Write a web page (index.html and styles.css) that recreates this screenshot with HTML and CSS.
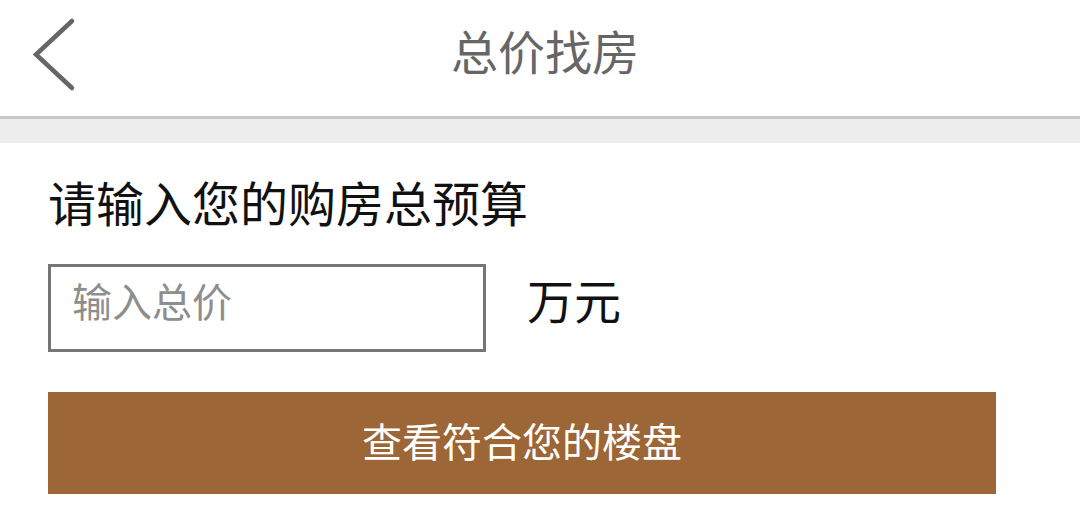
FILE: index.html
```html
<!DOCTYPE html>
<html lang="zh-CN">
<head>
<meta charset="utf-8">
<title>总价找房</title>
<link rel="stylesheet" href="styles.css">
</head>
<body>
<header class="topbar">
  <a class="back" href="#" aria-label="返回">
    <svg width="110" height="116" viewBox="0 0 110 116">
      <polyline points="72,21 36,54.5 72,88" fill="none" stroke="#666" stroke-width="4.5" stroke-linecap="round" stroke-linejoin="miter"/>
    </svg>
  </a>
  <h1 class="title">总价找房</h1>
  <div class="spacer"></div>
</header>
<div class="band"></div>
<main class="content">
  <p class="label">请输入您的购房总预算</p>
  <div class="row">
    <input class="price" type="text" placeholder="输入总价">
    <span class="unit">万元</span>
  </div>
  <button class="submit" type="button">查看符合您的楼盘</button>
</main>
</body>
</html>
```

FILE: styles.css
```css
* { box-sizing: border-box; }
html, body {
  margin: 0;
  padding: 0;
  background: #fff;
  font-family: "Noto Sans CJK SC", "Noto Sans", sans-serif;
}
.topbar {
  display: flex;
  align-items: center;
  height: 119px;
  border-bottom: 3px solid #c9c9c9;
  background: #fff;
}
.back {
  display: block;
  width: 110px;
  height: 116px;
  flex: none;
}
.back svg { display: block; }
.title {
  flex: 1;
  margin: 0 0 16px;
  text-align: center;
  font-size: 47px;
  font-weight: 400;
  line-height: 48px;
  color: #666;
}
.spacer {
  width: 100px;
  flex: none;
}
.band {
  height: 24px;
  background: #ededed;
}
.content {
  padding: 34px 84px 0 48px;
}
.label {
  margin: 0;
  font-size: 48px;
  line-height: 48px;
  color: #111;
}
.row {
  display: flex;
  align-items: center;
  margin-top: 39px;
}
.price {
  width: 438px;
  height: 88px;
  border: 3px solid #757575;
  padding: 0 0 17px 21px;
  font-family: inherit;
  font-size: 40px;
  color: #333;
  outline: none;
  background: #fff;
  border-radius: 0;
}
.price::placeholder { color: #8e8e8e; }
.unit {
  margin: 0 0 18px 41px;
  font-size: 47px;
  line-height: 48px;
  color: #111;
}
.submit {
  display: block;
  width: 948px;
  height: 102px;
  margin-top: 40px;
  border: 0;
  border-radius: 0;
  background: #9c6636;
  color: #fff;
  font-family: inherit;
  font-size: 40px;
  line-height: 48px;
  padding: 0 0 6px;
}
```
